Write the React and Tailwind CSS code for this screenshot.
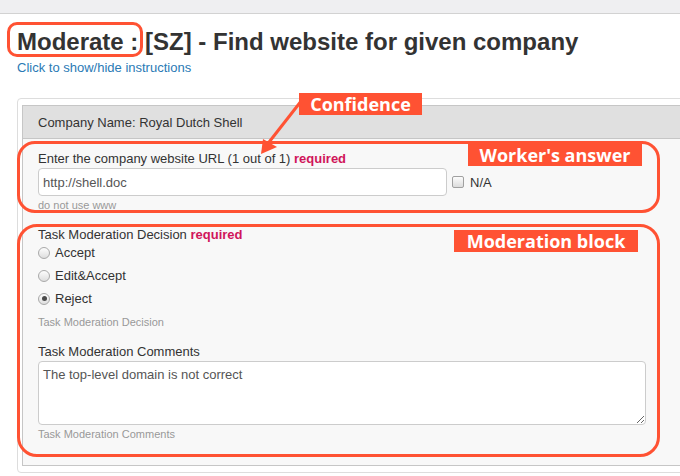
import React from "react";

function Radio({ checked }) {
  return (
    <span className="relative flex h-[12px] w-[12px] shrink-0 items-center justify-center rounded-full border border-[#a9a9a9] bg-gradient-to-b from-[#fdfdfd] to-[#dedede]">
      {checked && <span className="h-[5px] w-[5px] rounded-full bg-[#4a4a4a]" />}
    </span>
  );
}

function Tag({ children, className }) {
  return (
    <div
      className={
        "absolute flex h-[22px] items-center justify-center bg-[#ff5233] font-['Open_Sans',sans-serif] text-[18px] font-bold leading-none text-white " +
        className
      }
    >
      {children}
    </div>
  );
}

export default function App() {
  return (
    <div className="relative h-[476px] w-[680px] overflow-hidden bg-white font-['Liberation_Sans',Arial,sans-serif] text-[#333]">
      <div className="h-[14px] border-b border-[#d2d2d2] bg-[#efeff1]" />
      <h1 className="ml-[17px] mt-[16px] text-[24px] font-bold leading-[24px] text-[#333]">
        Moderate : [SZ] - Find website for given company
      </h1>
      <a className="ml-[17px] mt-[6px] block text-[13px] leading-[16px] text-[#2a7ab5]">
        Click to show/hide instructions
      </a>

      <div className="ml-[17px] mt-[22px] w-[700px] rounded-[4px] border border-[#dddddd] pb-[6px] pl-[4px] pt-[6px]">
        <div className="border border-[#c6c6c6] bg-[#f8f8f8]">
          <div className="flex h-[33px] items-center border-b border-[#c6c6c6] bg-[#e0e0e0] pl-[15px] text-[13px] leading-[15px]">
            Company Name: Royal Dutch Shell
          </div>
          <div className="pb-[24px] pl-[15px] pt-[12px] text-[13px] leading-[15px]">
            <div>
              Enter the company website URL (1 out of 1){" "}
              <span className="font-bold text-[#d0155a]">required</span>
            </div>
            <div className="mt-[2px] flex items-center">
              <div className="flex h-[28px] w-[409px] items-center rounded-[4px] border border-[#cccccc] bg-white pl-[4px] text-[#555]">
                http://shell.doc
              </div>
              <span className="ml-[5px] h-[12px] w-[12px] rounded-[2px] border border-[#a0a0a0] bg-gradient-to-b from-[#fcfcfc] to-[#dcdcdc]" />
              <span className="ml-[6px]">N/A</span>
            </div>
            <div className="mt-[3px] text-[11px] leading-[13px] text-[#999]">do not use www</div>

            <div className="mt-[15px]">
              Task Moderation Decision{" "}
              <span className="font-bold text-[#d0155a]">required</span>
            </div>
            <div className="mt-[-1px]">
              <div className="flex h-[23px] items-center gap-[5px]">
                <Radio />
                <span>Accept</span>
              </div>
              <div className="flex h-[23px] items-center gap-[5px]">
                <Radio />
                <span>Edit&amp;Accept</span>
              </div>
              <div className="flex h-[23px] items-center gap-[5px]">
                <Radio checked />
                <span>Reject</span>
              </div>
            </div>
            <div className="mt-[6px] text-[11px] leading-[13px] text-[#999]">Task Moderation Decision</div>

            <div className="mt-[15px]">Task Moderation Comments</div>
            <textarea
              readOnly
              defaultValue="The top-level domain is not correct"
              className="mt-[2px] block h-[64px] w-[608px] rounded-[4px] border border-[#cccccc] bg-white pl-[4px] pt-[5px] text-[13px] leading-[15px] text-[#555] outline-none"
            />
            <div className="mt-[3px] text-[11px] leading-[13px] text-[#999]">Task Moderation Comments</div>
          </div>
        </div>
      </div>

      {/* annotations */}
      <div className="absolute left-[7px] top-[22px] h-[35px] w-[136px] rounded-[10px] border-[3px] border-[#ff5233]" />
      <div className="absolute left-[17px] top-[141px] h-[72px] w-[643px] rounded-[18px] border-[3px] border-[#ff5233]" />
      <div className="absolute left-[17px] top-[224px] h-[233px] w-[643px] rounded-[20px] border-[3px] border-[#ff5233]" />

      <svg className="absolute left-0 top-0" width="680" height="476" viewBox="0 0 680 476">
        <line x1="302" y1="100" x2="266" y2="146" stroke="#ff5233" strokeWidth="3" />
        <polygon points="261,154 263,139 277,147" fill="#ff5233" />
      </svg>

      <Tag className="left-[299px] top-[93px] w-[123px]">Confidence</Tag>
      <Tag className="left-[468px] top-[144px] w-[174px]">Worker's answer</Tag>
      <Tag className="left-[454px] top-[230px] w-[184px]">Moderation block</Tag>
    </div>
  );
}
